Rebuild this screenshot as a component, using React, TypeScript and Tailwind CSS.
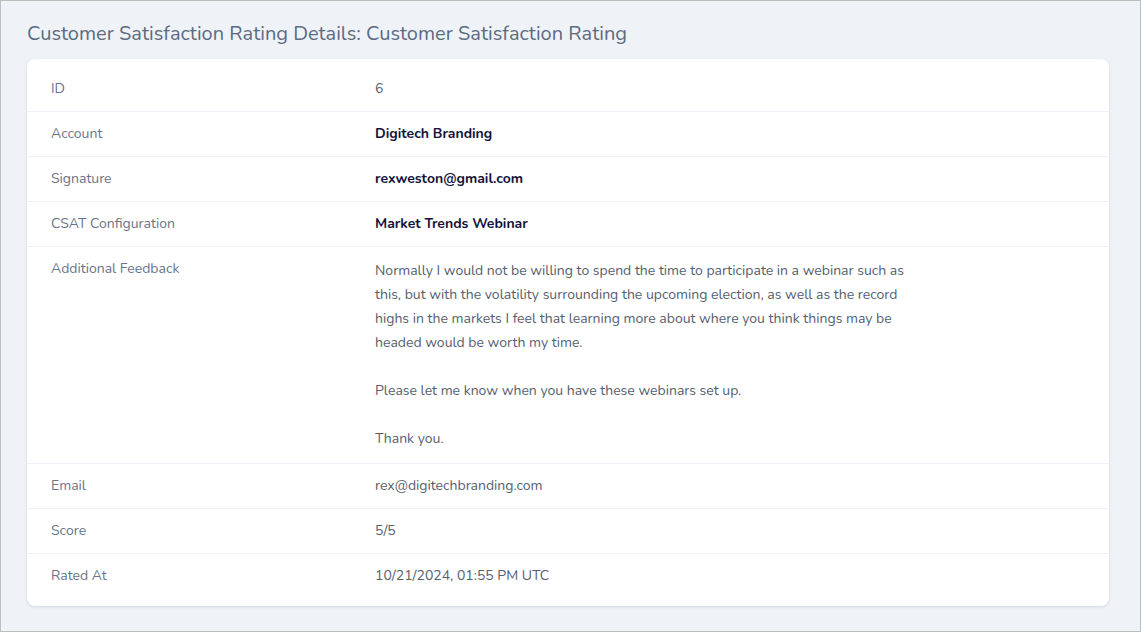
const rows: { label: string; value: string; bold?: boolean }[] = [
  { label: "ID", value: "6" },
  { label: "Account", value: "Digitech Branding", bold: true },
  { label: "Signature", value: "rexweston@gmail.com", bold: true },
  { label: "CSAT Configuration", value: "Market Trends Webinar", bold: true },
];

const rowsAfter: { label: string; value: string }[] = [
  { label: "Email", value: "rex@digitechbranding.com" },
  { label: "Score", value: "5/5" },
  { label: "Rated At", value: "10/21/2024, 01:55 PM UTC" },
];

function Row({ label, children }: { label: string; children: React.ReactNode }) {
  return (
    <div className="flex border-b border-[#eef1f5] px-6 py-3 text-sm leading-5 last:border-b-0">
      <div className="w-[324px] shrink-0 text-[#68748a]">{label}</div>
      <div className="flex-1">{children}</div>
    </div>
  );
}

export default function App() {
  return (
    <div
      className="h-[632px] w-[1141px] overflow-hidden border border-[#bdbdbd] bg-[#eff3f8] pl-[26px] pr-[31px] pt-[19px]"
      style={{ fontFamily: "Nunito, Lato, 'Noto Sans', sans-serif" }}
    >
      <h1 className="text-[20px] leading-[28px] text-[#5c6b81]">
        Customer Satisfaction Rating Details: Customer Satisfaction Rating
      </h1>
      <div className="mt-[11px] rounded-lg bg-white py-2 shadow-[0_1px_3px_rgba(0,0,0,0.12)]">
        {rows.map((r) => (
          <Row key={r.label} label={r.label}>
            <span className={r.bold ? "font-bold text-[#12123a]" : "text-[#55606f]"}>{r.value}</span>
          </Row>
        ))}
        <Row label="Additional Feedback">
          <div className="w-[545px] leading-6 text-[#55606f]">
            <p>
              Normally I would not be willing to spend the time to participate in a webinar such as
              this, but with the volatility surrounding the upcoming election, as well as the record
              highs in the markets I feel that learning more about where you think things may be
              headed would be worth my time.
            </p>
            <p className="mt-6">Please let me know when you have these webinars set up.</p>
            <p className="mt-6">Thank you.</p>
          </div>
        </Row>
        {rowsAfter.map((r) => (
          <Row key={r.label} label={r.label}>
            <span className="text-[#55606f]">{r.value}</span>
          </Row>
        ))}
      </div>
    </div>
  );
}
